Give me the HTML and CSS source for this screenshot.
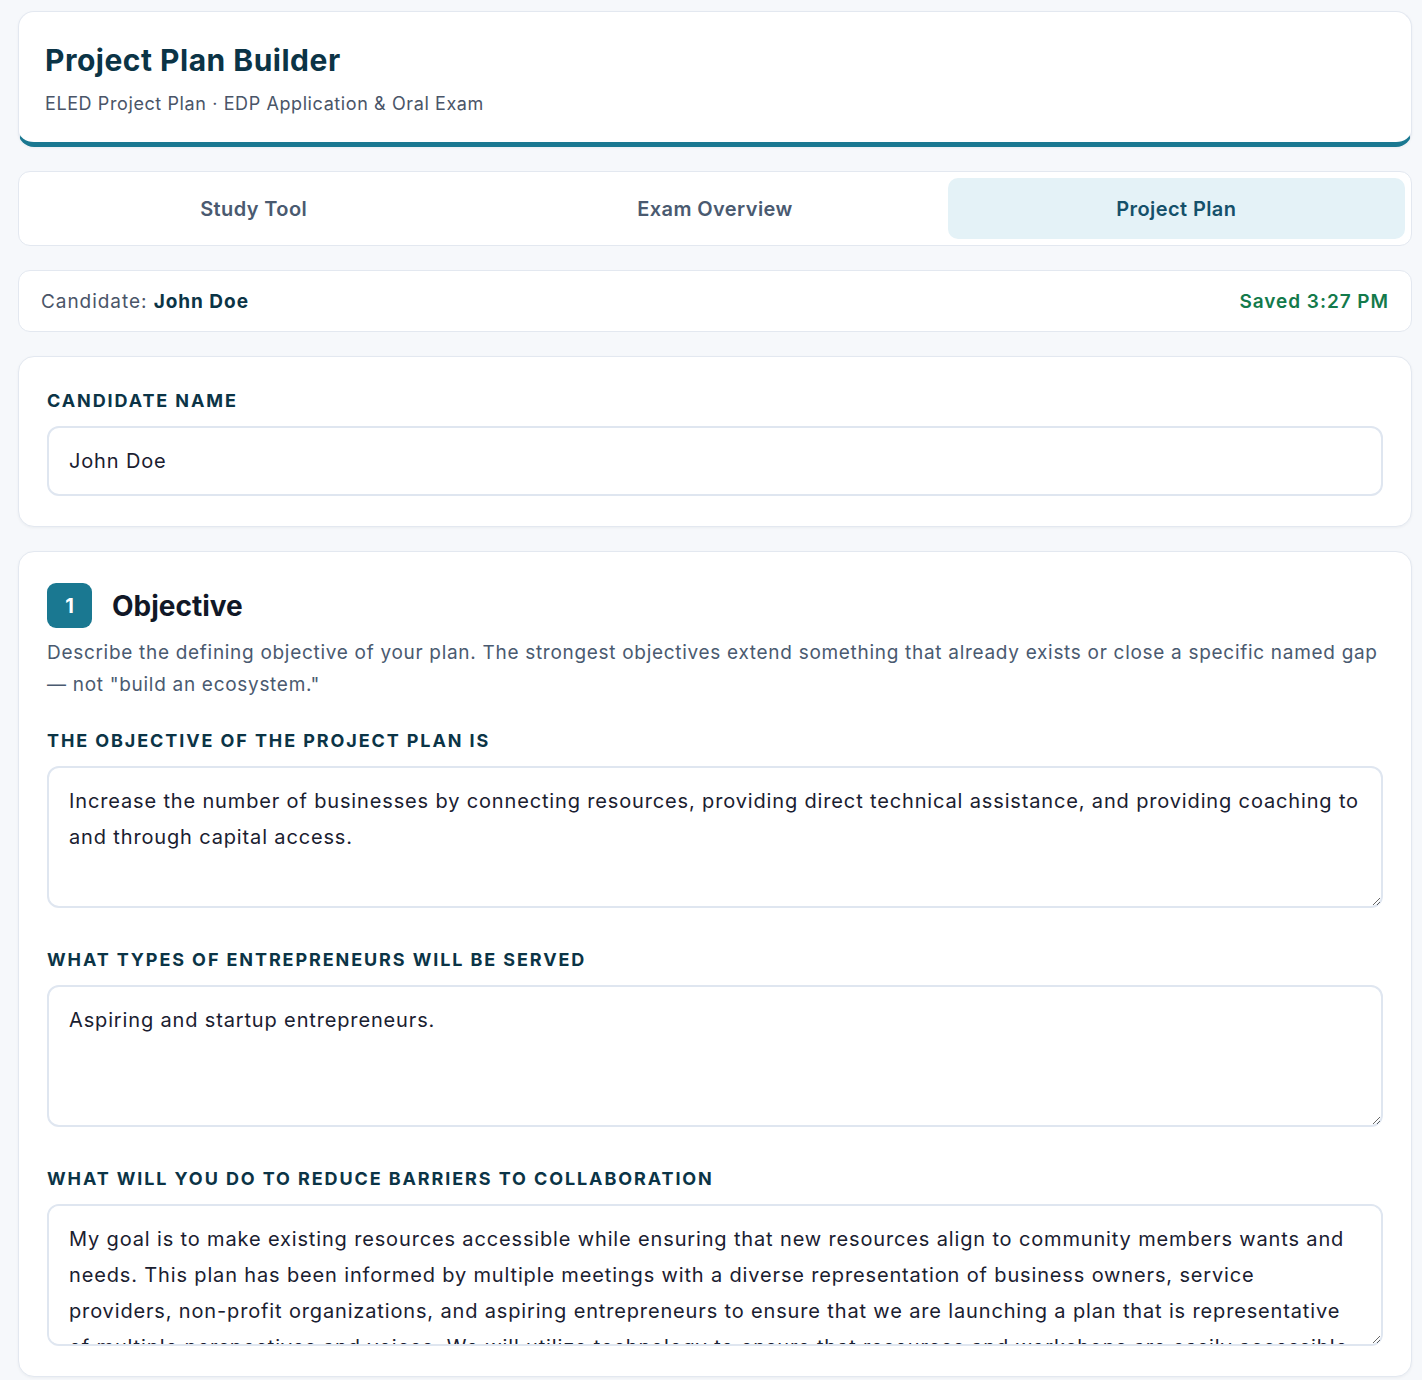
FILE: index.html
```html
<!DOCTYPE html>
<html lang="en">
<head>
<meta charset="utf-8">
<title>Project Plan Builder</title>
<link rel="stylesheet" href="styles.css">
</head>
<body>
<div class="page">
  <header class="hero card">
    <h1 class="hero-title">Project Plan Builder</h1>
    <p class="hero-sub">ELED Project Plan · EDP Application &amp; Oral Exam</p>
  </header>

  <nav class="tabs">
    <button class="tab">Study Tool</button>
    <button class="tab">Exam Overview</button>
    <button class="tab tab-active">Project Plan</button>
  </nav>

  <div class="status">
    <span class="status-cand">Candidate: <strong>John Doe</strong></span>
    <span class="status-saved">Saved 3:27 PM</span>
  </div>

  <section class="card panel">
    <label class="field-label">Candidate Name</label>
    <input class="text-input" type="text" value="John Doe">
  </section>

  <section class="card panel">
    <div class="section-head">
      <span class="badge">1</span>
      <h2 class="section-title">Objective</h2>
    </div>
    <p class="section-desc">Describe the defining objective of your plan. The strongest objectives extend something that already exists or close a specific named gap — not "build an ecosystem."</p>

    <div class="field">
      <label class="field-label">The objective of the project plan is</label>
      <textarea class="text-area">Increase the number of businesses by connecting resources, providing direct technical assistance, and providing coaching to and through capital access.</textarea>
    </div>
    <div class="field">
      <label class="field-label">What types of entrepreneurs will be served</label>
      <textarea class="text-area">Aspiring and startup entrepreneurs.</textarea>
    </div>
    <div class="field">
      <label class="field-label">What will you do to reduce barriers to collaboration</label>
      <textarea class="text-area">My goal is to make existing resources accessible while ensuring that new resources align to community members wants and needs. This plan has been informed by multiple meetings with a diverse representation of business owners, service providers, non-profit organizations, and aspiring entrepreneurs to ensure that we are launching a plan that is representative of multiple perspectives and voices. We will utilize technology to ensure that resources and workshops are easily accessible to all entrepreneurs regardless of location or schedule.</textarea>
    </div>
  </section>
</div>
</body>
</html>
```

FILE: styles.css
```css
* { box-sizing: border-box; }

html, body {
  margin: 0;
  padding: 0;
  background: #f6f8fb;
}

body {
  font-family: Inter, "Noto Sans", "Liberation Sans", sans-serif;
  color: #1a2030;
}

.page {
  padding: 11px 10px 40px 18px;
  display: flex;
  flex-direction: column;
  gap: 24px;
}

.card {
  background: #ffffff;
  border: 1px solid #e3e8f0;
  border-radius: 16px;
  box-shadow: 0 1px 3px rgba(15, 35, 60, 0.05);
}

.hero {
  padding: 30px 26px 26px;
  border-bottom: 5px solid #1a7891;
}

.hero-title {
  margin: 0;
  font-size: 30px;
  line-height: 36px;
  font-weight: 700;
  color: #0b3446;
  letter-spacing: 0.5px;
}

.hero-sub {
  margin: 13px 0 0;
  font-size: 18px;
  line-height: 25px;
  color: #4a5568;
  letter-spacing: 0.6px;
}

.tabs {
  display: grid;
  grid-template-columns: 1fr 1fr 1fr;
  gap: 4px;
  padding: 6px;
  background: #ffffff;
  border: 1px solid #e3e8f0;
  border-radius: 12px;
}

.tab {
  height: 61px;
  border: none;
  background: transparent;
  border-radius: 10px;
  font-family: inherit;
  font-size: 20px;
  font-weight: 600;
  letter-spacing: 0.4px;
  color: #4a5a70;
  cursor: pointer;
}

.tab-active {
  background: #e4f2f7;
  color: #14506a;
}

.status {
  display: flex;
  justify-content: space-between;
  align-items: center;
  height: 62px;
  padding: 0 22px;
  background: #ffffff;
  border: 1px solid #e3e8f0;
  border-radius: 12px;
  font-size: 19px;
  letter-spacing: 0.95px;
}

.status-cand {
  color: #4a5568;
}

.status-cand strong {
  color: #0b3446;
  font-weight: 700;
}

.status-saved {
  color: #137a4b;
  font-weight: 600;
}

.panel {
  padding: 31px 28px 30px;
}

.field-label {
  display: block;
  font-size: 18px;
  line-height: 26px;
  font-weight: 700;
  text-transform: uppercase;
  letter-spacing: 1.9px;
  color: #0b3446;
  margin-bottom: 12px;
}

.text-input {
  display: block;
  width: 100%;
  height: 70px;
  padding: 0 20px;
  border: 2px solid #dfe6f0;
  border-radius: 12px;
  font-family: inherit;
  font-size: 20px;
  letter-spacing: 0.85px;
  color: #1a2030;
  background: #ffffff;
  outline: none;
}

.section-head {
  display: flex;
  align-items: center;
  gap: 20px;
}

.badge {
  width: 45px;
  height: 45px;
  border-radius: 9px;
  background: #1a7891;
  color: #ffffff;
  display: flex;
  align-items: center;
  justify-content: center;
  font-size: 20px;
  font-weight: 700;
}

.section-title {
  margin: 0;
  font-size: 28px;
  font-weight: 700;
  color: #111827;
  letter-spacing: 0;
}

.section-desc {
  margin: 9px 0 0;
  font-size: 19px;
  line-height: 32px;
  color: #4a5a70;
  letter-spacing: 0.7px;
}

.field {
  margin-top: 39px;
}

.section-desc + .field {
  margin-top: 27px;
}

.text-area {
  display: block;
  width: 100%;
  height: 142px;
  padding: 15px 20px 14px;
  border: 2px solid #dfe6f0;
  border-radius: 12px;
  font-family: inherit;
  font-size: 20px;
  line-height: 36px;
  letter-spacing: 0.85px;
  color: #1a2030;
  background: #ffffff;
  resize: vertical;
  outline: none;
}
```
